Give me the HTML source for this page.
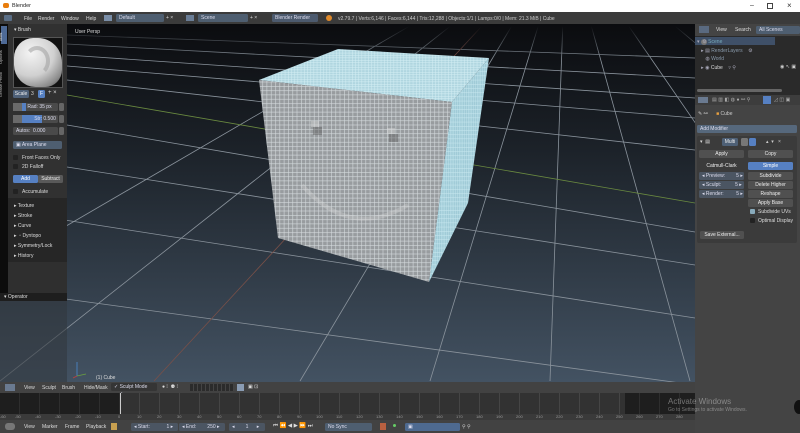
<!DOCTYPE html>
<html><head><meta charset="utf-8"><style>
*{margin:0;padding:0;box-sizing:border-box}
body{width:800px;height:433px;overflow:hidden;background:#444;font-family:"Liberation Sans",sans-serif;font-size:5px;color:#ddd;position:relative}
.a{position:absolute;white-space:nowrap}
.btn{position:absolute;background:#595959;border-radius:1.5px;color:#eee;text-align:center;line-height:8px;height:8px}
.fld{position:absolute;background:#4e5e70;border-radius:1.5px;color:#dde;line-height:8px;height:8px;padding-left:3px}
.blue{background:#5680c2;color:#fff}
.chk{position:absolute;width:5px;height:5px;background:#222;border-radius:1px}
</style></head><body>
<div class="a" style="left:0;top:0;width:800px;height:12px;background:#fff"></div>
<div class="a" style="left:3px;top:3px;width:6px;height:5px;background:#e87d0d;border-radius:2px"></div>
<div class="a" style="left:12px;top:3px;color:#222;font-size:5.5px">Blender</div>
<div class="a" style="left:750px;top:2px;color:#333;font-size:7px">–</div>
<div class="a" style="left:767px;top:3px;width:6px;height:6px;border:1px solid #444"></div>
<div class="a" style="left:787px;top:1px;color:#333;font-size:8px">×</div>
<div class="a" style="left:0;top:12px;width:800px;height:12px;background:#3b3b3b"></div>
<div class="a" style="left:4px;top:15px;width:8px;height:6px;background:#5a6e86;border-radius:1px"></div>
<div class="a" style="left:24px;top:16px">File</div>
<div class="a" style="left:38px;top:16px">Render</div>
<div class="a" style="left:61px;top:16px">Window</div>
<div class="a" style="left:86px;top:16px">Help</div>
<div class="a" style="left:104px;top:15px;width:8px;height:6px;background:#7a8ea8"></div>
<div class="fld" style="left:116px;top:14px;width:48px">Default</div>
<div class="a" style="left:166px;top:15px">+ ×</div>
<div class="a" style="left:186px;top:15px;width:8px;height:6px;background:#6a7d96"></div>
<div class="fld" style="left:198px;top:14px;width:50px">Scene</div>
<div class="a" style="left:250px;top:15px">+ ×</div>
<div class="fld" style="left:272px;top:14px;width:46px;background:#4c5a6e">Blender Render</div>
<div class="a" style="left:326px;top:15px;width:6px;height:6px;background:#e08a2a;border-radius:3px"></div>
<div class="a" style="left:338px;top:16px;color:#ccc">v2.79.7 | Verts:6,146 | Faces:6,144 | Tris:12,288 | Objects:1/1 | Lamps:0/0 | Mem: 21.3 MiB | Cube</div>

<svg class="a" style="left:0;top:24px" width="695" height="358" viewBox="0 24 695 358">
<defs>
<linearGradient id="bg" x1="0" y1="0" x2="0" y2="1"><stop offset="0" stop-color="#0b0c0f"/><stop offset="0.35" stop-color="#1c2229"/><stop offset="1" stop-color="#435262"/></linearGradient>
<linearGradient id="fade" gradientUnits="userSpaceOnUse" x1="0" y1="26" x2="0" y2="60"><stop offset="0" stop-color="#fff" stop-opacity="0"/><stop offset="1" stop-color="#fff" stop-opacity="1"/></linearGradient>
<mask id="m"><rect x="0" y="24" width="695" height="358" fill="url(#fade)"/></mask>
<pattern id="pf" width="4.3" height="4.3" patternUnits="userSpaceOnUse"><rect width="4.3" height="4.3" fill="#d4dadd"/><rect x="0.6" y="0.6" width="3.7" height="3.7" fill="#989c9f"/></pattern>
<pattern id="pt" width="3.2" height="2.4" patternUnits="userSpaceOnUse"><rect width="3.2" height="2.4" fill="#d4eef4"/><rect x="0.5" y="0.5" width="2.7" height="1.9" fill="#b0d6e0"/></pattern>
<pattern id="pr" width="1.8" height="4.2" patternUnits="userSpaceOnUse"><rect width="1.8" height="4.2" fill="#c8e8f0"/><rect x="0.4" y="0.5" width="1.4" height="3.7" fill="#a0cbd7"/></pattern>
</defs>
<rect x="0" y="24" width="695" height="358" fill="url(#bg)"/>
<g mask="url(#m)" stroke="#8a939c" stroke-width="0.8" fill="none">
<line x1="67" y1="35" x2="695" y2="58"/><line x1="67" y1="44" x2="695" y2="78"/><line x1="67" y1="55" x2="695" y2="98"/><line x1="67" y1="66" x2="695" y2="118"/><line x1="67" y1="80" x2="695" y2="150"/>
<line x1="67" y1="125" x2="695" y2="232"/><line x1="67" y1="167" x2="695" y2="265"/><line x1="0" y1="210" x2="695" y2="318"/><line x1="0" y1="290" x2="695" y2="385"/>
<line x1="566" y1="-65" x2="-200" y2="381"/><line x1="566" y1="-65" x2="0" y2="381"/><line x1="566" y1="-65" x2="300" y2="381"/><line x1="566" y1="-65" x2="430" y2="381"/><line x1="566" y1="-65" x2="550" y2="381"/><line x1="566" y1="-65" x2="690" y2="381"/><line x1="566" y1="-65" x2="873" y2="381"/><line x1="566" y1="-65" x2="1100" y2="381"/><line x1="566" y1="-65" x2="1400" y2="381"/><line x1="566" y1="-65" x2="1800" y2="381"/><line x1="566" y1="-65" x2="2400" y2="381"/>
<line x1="67" y1="95" x2="695" y2="203" stroke="#6a8a40"/>
<line x1="566" y1="-65" x2="154" y2="381" stroke="#7a5048"/>
</g>
<polygon points="338,49 489,58 452,102 259,80" fill="url(#pt)"/>
<polygon points="452,102 489,58 468,203 429,282" fill="url(#pr)"/>
<polygon points="259,80 452,102 429,282 278,238" fill="url(#pf)"/>
<g opacity="0.4"><rect x="311" y="121" width="8" height="6" fill="#ddd"/><rect x="313" y="127" width="9" height="8" fill="#555"/><rect x="387" y="128" width="8" height="6" fill="#ddd"/><rect x="389" y="134" width="9" height="8" fill="#555"/></g>
<path d="M302,185 Q350,240 408,205" stroke="#ddd" stroke-width="4" fill="none" opacity="0.3"/>
<text x="75" y="33" fill="#ddd" font-size="5" font-family="Liberation Sans">User Persp</text>
<text x="96" y="379" fill="#ddd" font-size="5" font-family="Liberation Sans">(1) Cube</text>
<line x1="77" y1="376" x2="77" y2="362" stroke="#4a8ad0" stroke-width="0.8"/><line x1="77" y1="376" x2="86" y2="374" stroke="#6aa040" stroke-width="0.8"/><line x1="77" y1="376" x2="73" y2="378" stroke="#c04040" stroke-width="0.8"/>
</svg>

<div class="a" style="left:0;top:24px;width:8px;height:270px;background:#0c0c0c"></div>
<div class="a" style="left:1px;top:26px;width:6px;height:18px;background:#4e6a96"></div>
<div class="a" style="left:1px;top:28px;font-size:4px;transform:rotate(-90deg) translate(-14px,-3px);transform-origin:0 0;color:#eee">Tools</div>
<div class="a" style="left:1px;top:48px;font-size:4px;transform:rotate(-90deg) translate(-16px,-3px);transform-origin:0 0;color:#bbb">Options</div>
<div class="a" style="left:1px;top:70px;font-size:4px;transform:rotate(-90deg) translate(-27px,-3px);transform-origin:0 0;color:#bbb">Grease Pencil</div>
<div class="a" style="left:8px;top:24px;width:59px;height:174px;background:#313131"></div>
<div class="a" style="left:14px;top:27px">▾ Brush</div>
<div class="a" style="left:13px;top:37px;width:50px;height:51px;background:#121212;border:1px solid #555"></div>
<div class="a" style="left:14px;top:38px;width:48px;height:49px;border-radius:40% 50% 35% 45%;background:radial-gradient(circle at 35% 30%,#f4f4f4,#d0d0d0 50%,#8a8a8a 80%,#333 100%)"></div>
<div class="a" style="left:24px;top:46px;width:26px;height:30px;border:4px solid #a0a0a0;border-radius:50%;border-left-color:transparent;border-bottom-color:transparent;opacity:.55"></div>
<div class="btn" style="left:13px;top:90px;width:16px;background:#4f6179">Scale</div>
<div class="a" style="left:31px;top:91px">3</div>
<div class="btn blue" style="left:38px;top:90px;width:7px">F</div>
<div class="a" style="left:48px;top:90px;font-size:6px">+ ×</div>
<div class="fld" style="left:13px;top:103px;width:45px;background:#4a4a4a;padding-left:0"><span style="display:inline-block;width:9px;height:8px;background:#6a6a6a;vertical-align:top"></span><span style="display:inline-block;width:4px;height:8px;background:#5680c2;vertical-align:top"></span> Rad: 35 px</div>
<div class="btn" style="left:59px;top:103px;width:5px;background:#666"></div>
<div class="fld" style="left:13px;top:115px;width:45px;background:#4a4a4a;padding-left:0"><span style="display:inline-block;width:9px;height:8px;background:#6a6a6a;vertical-align:top"></span><span style="display:inline-block;width:20px;height:8px;background:#5680c2;vertical-align:top;text-align:right">Str:</span> 0.500</div>
<div class="btn" style="left:59px;top:115px;width:5px;background:#666"></div>
<div class="fld" style="left:13px;top:127px;width:45px;background:#4a4a4a">Autos:&nbsp; 0.000</div>
<div class="btn" style="left:59px;top:127px;width:5px;background:#666"></div>
<div class="fld" style="left:13px;top:141px;width:49px;background:#4e5e70">▣ Area Plane</div>
<div class="chk" style="left:13px;top:155px"></div><div class="a" style="left:22px;top:155px">Front Faces Only</div>
<div class="chk" style="left:13px;top:164px"></div><div class="a" style="left:22px;top:164px">2D Falloff</div>
<div class="btn blue" style="left:13px;top:175px;width:25px">Add</div>
<div class="btn" style="left:38px;top:175px;width:25px">Subtract</div>
<div class="chk" style="left:13px;top:189px"></div><div class="a" style="left:22px;top:189px">Accumulate</div>
<div class="a" style="left:8px;top:198px;width:59px;height:64px;background:#262626"></div>
<div class="a" style="left:14px;top:201px;line-height:10px">▸ Texture<br>▸ Stroke<br>▸ Curve<br>▸ &nbsp;▫ Dyntopo<br>▸ Symmetry/Lock<br>▸ History</div>
<div class="a" style="left:8px;top:262px;width:59px;height:31px;background:#2f2f2f"></div>
<div class="a" style="left:0;top:293px;width:67px;height:8px;background:#1e1e1e"></div>
<div class="a" style="left:4px;top:294px">▾ Operator</div>
<div class="a" style="left:0;top:301px;width:67px;height:81px;background:rgba(50,55,60,.55)"></div>

<div class="a" style="left:695px;top:24px;width:105px;height:71px;background:#2a2a2a"></div>
<div class="a" style="left:695px;top:24px;width:105px;height:12px;background:#444"></div>
<div class="a" style="left:699px;top:26px;width:10px;height:7px;background:#5a6a80"></div>
<div class="a" style="left:716px;top:27px">View</div>
<div class="a" style="left:735px;top:27px">Search</div>
<div class="fld" style="left:756px;top:26px;width:44px">All Scenes</div>
<div class="a" style="left:695px;top:37px;width:80px;height:8px;background:#3f5068"></div>
<div class="a" style="left:697px;top:38px;line-height:8.5px;color:#aab">▾ <span style="background:#777;border-radius:3px">&nbsp;⚙</span> <span style="color:#7ab">Scene</span><br>&nbsp;&nbsp;&nbsp;▸ ▤ <span style="color:#89a">RenderLayers</span> &nbsp;&nbsp;&nbsp;⚙<br>&nbsp;&nbsp;&nbsp;&nbsp;&nbsp; ◍ <span style="color:#89a">World</span><br>&nbsp;&nbsp;&nbsp;▸ ◉ <span style="color:#ddd">Cube</span> &nbsp;&nbsp;&nbsp;▿ ⚲</div>
<div class="a" style="left:780px;top:64px;color:#ccc">◉ ↖ ▣</div>
<div class="a" style="left:697px;top:89px;width:85px;height:3px;background:#666;border-radius:2px"></div>

<div class="a" style="left:695px;top:95px;width:105px;height:338px;background:#444"></div>
<div class="a" style="left:695px;top:95px;width:105px;height:10px;background:#3d3d3d"></div>
<div class="a" style="left:698px;top:97px;width:10px;height:6px;background:#6a7a90"></div>
<div class="a" style="left:712px;top:97px;font-size:5px;color:#aaa;letter-spacing:1.5px">▤▥◧◍●⚯⚲</div>
<div class="a" style="left:763px;top:96px;width:8px;height:8px;background:#5680c2"></div>
<div class="a" style="left:774px;top:97px;color:#aaa;letter-spacing:1.5px">◿◫▣</div>
<div class="a" style="left:698px;top:111px;color:#ccc">✎ ⚯ &nbsp;&nbsp;&nbsp;&nbsp;&nbsp;<span style="color:#e8a040">■</span> Cube</div>
<div class="fld" style="left:697px;top:125px;width:100px;background:#56687c">Add Modifier</div>
<div class="a" style="left:697px;top:136px;width:100px;height:107px;background:#3b3b3b;border-radius:2px"></div>
<div class="a" style="left:700px;top:139px;color:#ddd">▾ &nbsp;▤</div>
<div class="btn" style="left:722px;top:138px;width:16px;background:#4e6076">Multi</div>
<div class="btn" style="left:741px;top:138px;width:7px;background:#777"></div>
<div class="btn" style="left:749px;top:138px;width:7px;background:#5680c2"></div>
<div class="a" style="left:766px;top:139px;color:#ccc">▴ &nbsp;▾ &nbsp;&nbsp;×</div>
<div class="btn" style="left:699px;top:150px;width:45px;background:#505050">Apply</div>
<div class="btn" style="left:748px;top:150px;width:45px;background:#505050">Copy</div>
<div class="btn" style="left:699px;top:162px;width:45px;background:#3b3b3b">Catmull-Clark</div>
<div class="btn blue" style="left:748px;top:162px;width:45px">Simple</div>
<div class="fld" style="left:699px;top:172px;width:45px;background:#4b5562">◂ Preview: &nbsp;&nbsp;&nbsp;&nbsp;&nbsp;&nbsp;&nbsp;5 ▸</div>
<div class="fld" style="left:699px;top:181px;width:45px;background:#4b5562">◂ Sculpt: &nbsp;&nbsp;&nbsp;&nbsp;&nbsp;&nbsp;&nbsp;&nbsp;&nbsp;5 ▸</div>
<div class="fld" style="left:699px;top:190px;width:45px;background:#4b5562">◂ Render: &nbsp;&nbsp;&nbsp;&nbsp;&nbsp;&nbsp;&nbsp;&nbsp;5 ▸</div>
<div class="btn" style="left:748px;top:172px;width:45px;background:#505050">Subdivide</div>
<div class="btn" style="left:748px;top:181px;width:45px;background:#505050">Delete Higher</div>
<div class="btn" style="left:748px;top:190px;width:45px;background:#505050">Reshape</div>
<div class="btn" style="left:748px;top:199px;width:45px;background:#505050">Apply Base</div>
<div class="chk" style="left:750px;top:209px;background:#8ab"></div><div class="a" style="left:758px;top:209px">Subdivide UVs</div>
<div class="chk" style="left:750px;top:218px"></div><div class="a" style="left:758px;top:218px">Optimal Display</div>
<div class="btn" style="left:700px;top:231px;width:44px;background:#505050">Save External...</div>

<div class="a" style="left:0;top:382px;width:695px;height:11px;background:#424242"></div>
<div class="a" style="left:5px;top:384px;width:10px;height:7px;background:#6a7a90"></div>
<div class="a" style="left:24px;top:385px">View</div>
<div class="a" style="left:42px;top:385px">Sculpt</div>
<div class="a" style="left:62px;top:385px">Brush</div>
<div class="a" style="left:84px;top:385px">Hide/Mask</div>
<div class="fld" style="left:111px;top:383px;width:46px;background:#353535">✓ Sculpt Mode &nbsp;&nbsp;&nbsp;&nbsp;⇕</div>
<div class="a" style="left:162px;top:384px;color:#ddd">● ⁞ &nbsp;⚉ ⁞</div>
<div class="a" style="left:190px;top:384px;width:44px;height:7px;background:repeating-linear-gradient(90deg,#2b2b2b 0 3px,#444 3px 4px)"></div>
<div class="a" style="left:237px;top:384px;width:7px;height:7px;background:#8a9cb3"></div>
<div class="a" style="left:248px;top:384px;color:#ddd">▣ ⊡</div>
<div class="a" style="left:0;top:393px;width:695px;height:21px;background:repeating-linear-gradient(90deg,#1e1e1e 0 19px,#2e2e2e 19px 20px)"></div>
<div class="a" style="left:120px;top:393px;width:505px;height:21px;background:repeating-linear-gradient(90deg,#323232 0 19px,#454545 19px 20px)"></div>
<div class="a" style="left:120px;top:393px;width:1px;height:21px;background:#ccc"></div>
<div class="a" style="left:0;top:414px;width:695px;height:6px;background:#3a3a3a"></div>
<div class="a" style="left:0;top:414px;font-size:4px;color:#999">
<span style="position:absolute;left:0">-60</span><span style="position:absolute;left:15px">-50</span><span style="position:absolute;left:35px">-40</span><span style="position:absolute;left:55px">-30</span><span style="position:absolute;left:75px">-20</span><span style="position:absolute;left:95px">-10</span><span style="position:absolute;left:118px">0</span><span style="position:absolute;left:137px">10</span><span style="position:absolute;left:157px">20</span><span style="position:absolute;left:177px">30</span><span style="position:absolute;left:197px">40</span><span style="position:absolute;left:217px">50</span><span style="position:absolute;left:237px">60</span><span style="position:absolute;left:257px">70</span><span style="position:absolute;left:277px">80</span><span style="position:absolute;left:297px">90</span><span style="position:absolute;left:316px">100</span><span style="position:absolute;left:336px">110</span><span style="position:absolute;left:356px">120</span><span style="position:absolute;left:376px">130</span><span style="position:absolute;left:396px">140</span><span style="position:absolute;left:416px">150</span><span style="position:absolute;left:436px">160</span><span style="position:absolute;left:456px">170</span><span style="position:absolute;left:476px">180</span><span style="position:absolute;left:496px">190</span><span style="position:absolute;left:516px">200</span><span style="position:absolute;left:536px">210</span><span style="position:absolute;left:556px">220</span><span style="position:absolute;left:576px">230</span><span style="position:absolute;left:596px">240</span><span style="position:absolute;left:616px">250</span><span style="position:absolute;left:636px">260</span><span style="position:absolute;left:656px">270</span><span style="position:absolute;left:676px">280</span></div>
<div class="a" style="left:0;top:420px;width:695px;height:13px;background:#424242"></div>
<div class="a" style="left:5px;top:423px;width:10px;height:7px;background:#777;border-radius:3px"></div>
<div class="a" style="left:24px;top:424px">View</div>
<div class="a" style="left:42px;top:424px">Marker</div>
<div class="a" style="left:65px;top:424px">Frame</div>
<div class="a" style="left:86px;top:424px">Playback</div>
<div class="a" style="left:111px;top:423px;width:6px;height:7px;background:#c8a050"></div>
<div class="fld" style="left:131px;top:423px;width:47px;background:#4b5562">◂ Start: &nbsp;&nbsp;&nbsp;&nbsp;&nbsp;&nbsp;&nbsp;&nbsp;&nbsp;&nbsp;&nbsp;1 ▸</div>
<div class="fld" style="left:179px;top:423px;width:46px;background:#4b5562">◂ End: &nbsp;&nbsp;&nbsp;&nbsp;&nbsp;&nbsp;&nbsp;250 ▸</div>
<div class="fld" style="left:229px;top:423px;width:36px;background:#4b5562">◂ &nbsp;&nbsp;&nbsp;&nbsp;&nbsp;&nbsp;&nbsp;1 &nbsp;&nbsp;&nbsp;&nbsp;&nbsp;▸</div>
<div class="a" style="left:273px;top:423px;color:#ddd;font-size:5.5px">⏮ ⏪ ◀ ▶ ⏩ ⏭</div>
<div class="fld" style="left:325px;top:423px;width:47px;background:#4e5e70">No Sync</div>
<div class="a" style="left:380px;top:423px;width:6px;height:7px;background:#b86040"></div>
<div class="a" style="left:393px;top:424px;width:3px;height:3px;background:#6c6;border-radius:50%"></div>
<div class="fld" style="left:405px;top:423px;width:55px;background:#4e6a90">▣</div>
<div class="a" style="left:462px;top:424px;color:#ccc">⚲ ⚲</div>
<div class="a" style="left:668px;top:397px;font-size:8px;color:rgba(220,220,220,.45)">Activate Windows</div>
<div class="a" style="left:668px;top:407px;font-size:5px;color:rgba(220,220,220,.45)">Go to Settings to activate Windows.</div>
<div class="a" style="left:794px;top:400px;width:10px;height:14px;background:#111;border-radius:50%"></div>
</body></html>
